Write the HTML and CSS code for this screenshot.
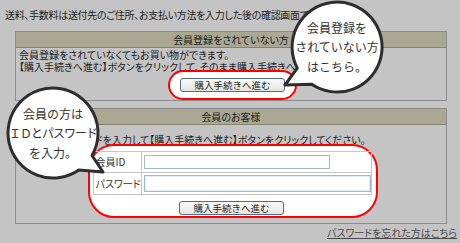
FILE: index.html
```html
<!DOCTYPE html>
<html lang="ja">
<head>
  <meta charset="UTF-8" />
  <title>購入手続き</title>
  <link rel="stylesheet" href="styles.css">
</head>
<body>
  <div class="page">
    <p class="note">送料、手数料は送付先のご住所、お支払い方法を入力した後の確認画面でご確認下さい。</p>

    <div class="panel">
      <div class="panel-head">会員登録をされていない方</div>
      <div class="panel-body">
        <p class="lead">会員登録をされていなくてもお買い物ができます。<br>【購入手続きへ進む】ボタンをクリックして、そのまま購入手続きへお進みください。</p>
        <div class="mark mark-guest">
          <button class="btn">購入手続きへ進む</button>
        </div>
      </div>
    </div>

    <div class="panel panel-member">
      <div class="panel-head">会員のお客様</div>
      <div class="panel-body">
        <p class="lead lead-member">会員IDとパスワードを入力して【購入手続きへ進む】ボタンをクリックしてください。</p>
        <div class="mark mark-member">
          <table class="login">
            <tr class="row-id">
              <th>会員ID</th>
              <td><input type="text" class="field field-id"></td>
            </tr>
            <tr class="row-pw">
              <th>パスワード</th>
              <td><input type="password" class="field field-pw"></td>
            </tr>
          </table>
          <button class="btn">購入手続きへ進む</button>
        </div>
      </div>
    </div>

    <div class="forgot"><a href="#">パスワードを忘れた方はこちら</a></div>

    <!-- callouts -->
    <div class="callout callout-guest">
      <svg viewBox="0 0 92 92" width="92" height="92">
        <path d="M6.3,67.1 L-6,84 L20.8,83.3 A45,45 0 1 0 6.3,67.1 Z" />
      </svg>
      <div class="callout-text"><div>会員登録を<br>されていない方<br>はこちら。</div></div>
    </div>
    <div class="callout callout-member">
      <svg viewBox="0 0 92 92" width="92" height="92">
        <path d="M85,68.5 L96,85 L71.8,82.9 A45,45 0 1 1 85,68.5 Z" />
      </svg>
      <div class="callout-text"><div>会員の方は<br><span class="tight">ＩＤとパスワード</span><br>を入力。</div></div>
    </div>
  </div>
</body>
</html>
```

FILE: styles.css
```css
* {
  box-sizing: border-box;
}
body {
  margin: 0;
  background-color: #c4c4c4;
  font-family: "Noto Sans CJK JP", "Noto Sans", sans-serif;
  font-size: 10px;
  color: #1c1c1c;
  overflow: hidden;
}
.page {
  position: relative;
  width: 460px;
  height: 243px;
  padding-top: 9px;
  font-feature-settings: "palt";
}
p {
  margin: 0;
}
.note {
  margin-left: 5px;
  line-height: 12px;
  letter-spacing: -0.3px;
  white-space: nowrap;
}
.panel {
  width: 432px;
  margin: 10px 0 0 15px;
  border: 1px solid #8d8d8d;
}
.panel-member {
  margin-top: 7px;
}
.panel-head {
  height: 16px;
  line-height: 15px;
  text-align: center;
  background-color: #aaa893;
  border-bottom: 1px solid #85846f;
}
.panel-body {
  padding: 1px 0 0 3px;
}
.panel-member .panel-body {
  padding: 9px 0 5px 3px;
}
.lead {
  line-height: 12px;
  white-space: nowrap;
}
.mark {
  position: relative;
  background-color: #fff;
  border: 2px solid #ff0000;
  margin-left: auto;
  margin-right: auto;
}
.mark-guest {
  width: 129px;
  margin-top: -3px;
  padding: 6px 10px;
  border-radius: 15px;
}
.mark-member {
  width: 290px;
  margin-top: -2px;
  padding: 5px 5px 1px 3px;
  border-radius: 26px;
  text-align: center;
}
.btn {
  display: block;
  width: 105px;
  height: 14px;
  margin: 0 auto;
  padding: 0;
  font-family: inherit;
  font-size: 9.5px;
  line-height: 12px;
  color: #1c1c1c;
  background: linear-gradient(#fafafa, #e6e6e0);
  border: 1px solid #566a84;
  border-radius: 3px;
}
.mark-member .btn {
  margin-top: 6px;
}
.login {
  width: 278px;
  border-collapse: collapse;
  border: 1px solid #b7b7b7;
  text-align: left;
}
.login th,
.login td {
  border: 1px solid #c6c6c6;
  padding: 0 0 0 2px;
  font-weight: normal;
  color: #333;
  white-space: nowrap;
  line-height: 12px;
}
.login th {
  width: 45px;
}
.row-id {
  height: 21px;
}
.row-pw {
  height: 22px;
}
.field {
  display: block;
  margin: 0;
  padding: 0;
  border: 1px solid #a4bacb;
  background-color: #fff;
}
.field-id {
  width: 186px;
  height: 14px;
}
.field-pw {
  width: 227px;
  height: 17px;
  box-shadow: inset 0 0 0 1px #e4ecf2;
}
.forgot {
  margin: 3px 3px 0 0;
  text-align: right;
  line-height: 12px;
}
.forgot a {
  color: #4a4a4a;
}
.callout {
  position: absolute;
  width: 92px;
  height: 92px;
}
.callout svg {
  position: absolute;
  left: 0;
  top: 0;
  overflow: visible;
}
.callout svg path {
  fill: #fff;
  stroke: #2e2e2e;
  stroke-width: 3;
  stroke-linejoin: round;
}
.callout-text {
  position: relative;
  height: 100%;
  display: flex;
  align-items: center;
  justify-content: center;
  text-align: center;
  font-size: 12px;
  line-height: 19.5px;
  color: #333;
  white-space: nowrap;
  font-feature-settings: normal;
}
.callout-guest {
  left: 291px;
  top: 1px;
}
.callout-member {
  left: 7px;
  top: 87px;
}
.tight {
  letter-spacing: -1px;
}
```
